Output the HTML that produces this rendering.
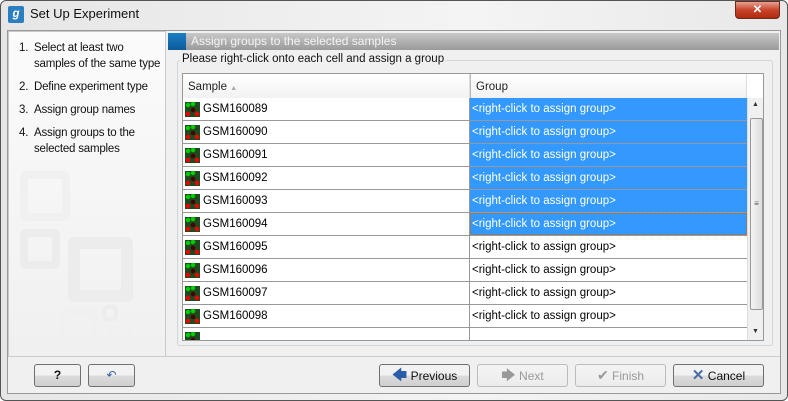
<!DOCTYPE html><html><head><style>
*{box-sizing:border-box;margin:0;padding:0}
body{width:788px;height:401px;overflow:hidden;background:#fff;font-family:"Liberation Sans",sans-serif;font-size:11.5px;position:relative}
.frame{position:absolute;left:0;top:0;width:788px;height:401px;border:1px solid #555;border-radius:6px;background:linear-gradient(90deg,#e6e6e6,#f4f4f4 60%,#e8e8e8)}
.inner{position:absolute;left:7px;top:30px;width:774px;height:364px;background:#f0f0f0;border:1px solid #999}
.abs{position:absolute}
.left{left:8px;top:31px;width:158px;height:326px;background:linear-gradient(#fbfbfb,#f0f0f0);border:1px solid #c9c9c9}
.left ol{list-style:none;position:absolute;left:10px;top:8px;font-size:11.5px;letter-spacing:-0.2px;color:#111;line-height:16px}
.left li{display:flex;margin-bottom:7px}
.left li span{width:15px;flex:none}
.sq{position:absolute;border-radius:6px;border:8px solid #ececec}
.hdr{left:168px;top:33px;width:611px;height:17px;background:linear-gradient(#c8c8c8,#9a9a9a);color:#f4f4f4;font-size:12px;line-height:17px;padding-left:23px}
.hdr:before{content:"";position:absolute;left:0;top:0;width:18px;height:17px;background:linear-gradient(#1c7fc4,#0a5a9a)}
.gb{left:177px;top:60px;width:596px;height:286px;border:1px solid #cfd6dc;border-radius:3px}
.gbl{left:180px;top:53px;background:#f0f0f0;padding:0 2px;color:#111}
.tbl{left:182px;top:73px;width:582px;height:268px;border:1px solid #999;background:#fff;overflow:hidden}
.th{position:absolute;top:0;height:24px;background:linear-gradient(#fff,#f2f2f2);border-right:1px solid #ddd;line-height:26px;padding-left:5px;color:#222}
.row{position:absolute;left:0;width:564px;height:23px;border-bottom:1px solid #999}
.c1{position:absolute;left:0;width:287px;height:22px;border-right:1px solid #999;line-height:22px;padding-left:20px}
.c2{position:absolute;left:287px;width:277px;height:22px;line-height:22px;padding-left:2px}
.sel .c2{background:#3399ff;color:#fff}
.ic{position:absolute;left:2px;top:4px;width:15px;height:15px;background:radial-gradient(circle at 3px 3px,#0c0 2px,transparent 2.5px),radial-gradient(circle at 12px 12px,#e00 2px,transparent 2.5px),radial-gradient(circle at 3px 12px,#e00 2px,transparent 2.5px),radial-gradient(circle at 8px 8px,#400 2px,transparent 2.5px),radial-gradient(circle at 8px 2px,#0c0 2px,transparent 2.5px),#1f4a1f}
.sb{position:absolute;left:564px;top:24px;width:17px;height:244px;background:#f0f0f0;border-left:1px solid #ddd}
.btn{position:absolute;top:364px;height:23px;border:1px solid #707070;border-radius:3px;background:linear-gradient(#f2f2f2 50%,#dcdcdc 50%,#cfcfcf);text-align:center;line-height:21px;color:#111;font-size:12px}
.dis{color:#999;border-color:#bbb;background:linear-gradient(#f4f4f4,#ececec)}
</style></head><body>
<div class="frame"></div>
<div class="abs" style="left:8px;top:6px;width:16px;height:17px;background:#2a7fc1;border-radius:2px;color:#fff;font-weight:bold;font-style:italic;text-align:center;line-height:16px">g</div>
<div class="abs" style="left:30px;top:6px;font-size:13px;color:#111">Set Up Experiment</div>
<div class="abs" style="left:735px;top:1px;width:45px;height:18px;background:linear-gradient(#e8a090,#c8432a 50%,#b02a10);border:1px solid #6b2a20;border-radius:0 0 4px 4px;color:#fff;text-align:center;font-weight:bold;line-height:16px">✕</div>
<div class="inner"></div>
<div class="abs left">
<div class="sq" style="left:11px;top:139px;width:50px;height:50px;border-color:#f0f0f0"></div>
<div class="sq" style="left:11px;top:197px;width:40px;height:40px"></div>
<div class="sq" style="left:59px;top:205px;width:65px;height:65px;border-width:12px"></div>
<div class="sq" style="left:51px;top:277px;width:38px;height:38px;border-color:#f0f0f0;border-width:6px"></div>
<div class="sq" style="left:93px;top:273px;width:16px;height:16px;border-width:4px"></div>
<div class="sq" style="left:100px;top:294px;width:22px;height:22px;border-width:4px;border-color:#f0f0f0"></div>
<ol>
<li><span>1.</span><div>Select at least two samples of the same type</div></li>
<li><span>2.</span><div>Define experiment type</div></li>
<li><span>3.</span><div>Assign group names</div></li>
<li><span>4.</span><div>Assign groups to the selected samples</div></li>
</ol></div>
<div class="abs hdr">Assign groups to the selected samples</div>
<div class="abs gb"></div>
<div class="abs gbl">Please right-click onto each cell and assign a group</div>
<div class="abs tbl">
<div class="th" style="left:0;width:287px">Sample <span style="font-size:7px;color:#aaa">▲</span></div>
<div class="th" style="left:287px;width:277px;border-left:1px solid #bbb">Group</div>
<div class="row sel" style="top:24px"><div class="c1"><i class="ic"></i>GSM160089</div><div class="c2">&lt;right-click to assign group&gt;</div></div>
<div class="row sel" style="top:47px"><div class="c1"><i class="ic"></i>GSM160090</div><div class="c2">&lt;right-click to assign group&gt;</div></div>
<div class="row sel" style="top:70px"><div class="c1"><i class="ic"></i>GSM160091</div><div class="c2">&lt;right-click to assign group&gt;</div></div>
<div class="row sel" style="top:93px"><div class="c1"><i class="ic"></i>GSM160092</div><div class="c2">&lt;right-click to assign group&gt;</div></div>
<div class="row sel" style="top:116px"><div class="c1"><i class="ic"></i>GSM160093</div><div class="c2">&lt;right-click to assign group&gt;</div></div>
<div class="row sel" style="top:139px"><div class="c1"><i class="ic"></i>GSM160094</div><div class="c2" style="outline:1px dotted #c60;outline-offset:-1px">&lt;right-click to assign group&gt;</div></div>
<div class="row" style="top:162px"><div class="c1"><i class="ic"></i>GSM160095</div><div class="c2">&lt;right-click to assign group&gt;</div></div>
<div class="row" style="top:185px"><div class="c1"><i class="ic"></i>GSM160096</div><div class="c2">&lt;right-click to assign group&gt;</div></div>
<div class="row" style="top:208px"><div class="c1"><i class="ic"></i>GSM160097</div><div class="c2">&lt;right-click to assign group&gt;</div></div>
<div class="row" style="top:231px"><div class="c1"><i class="ic"></i>GSM160098</div><div class="c2">&lt;right-click to assign group&gt;</div></div>
<div class="row" style="top:254px"><div class="c1"><i class="ic"></i></div><div class="c2"></div></div>
<div class="sb"><div style="position:absolute;top:3px;left:4px;font-size:7px;color:#333">▲</div>
<div style="position:absolute;left:2px;top:20px;width:13px;height:192px;border:1px solid #999;border-radius:2px;background:linear-gradient(90deg,#f4f4f4,#ddd);text-align:center;line-height:170px;font-size:8px;color:#555">≡</div>
<div style="position:absolute;top:230px;left:4px;font-size:7px;color:#333">▼</div></div>
</div>
<div class="abs" style="left:8px;top:356px;width:772px;height:1px;background:#ccc"></div>
<div class="btn" style="left:34px;width:47px;font-weight:bold">?</div>
<div class="btn" style="left:88px;width:47px;color:#3a5fa0">↶</div>
<div class="btn" style="left:379px;width:91px"><span style="color:#2a5fa8;font-size:15px">🡄</span> Previous</div>
<div class="btn dis" style="left:477px;width:91px"><span style="font-size:14px">🡆</span> Next</div>
<div class="btn dis" style="left:575px;width:91px"><span style="font-size:14px">✔</span> Finish</div>
<div class="btn" style="left:673px;width:91px"><span style="color:#4a6fa0;font-size:15px;font-weight:bold">✕</span> Cancel</div>
</body></html>
